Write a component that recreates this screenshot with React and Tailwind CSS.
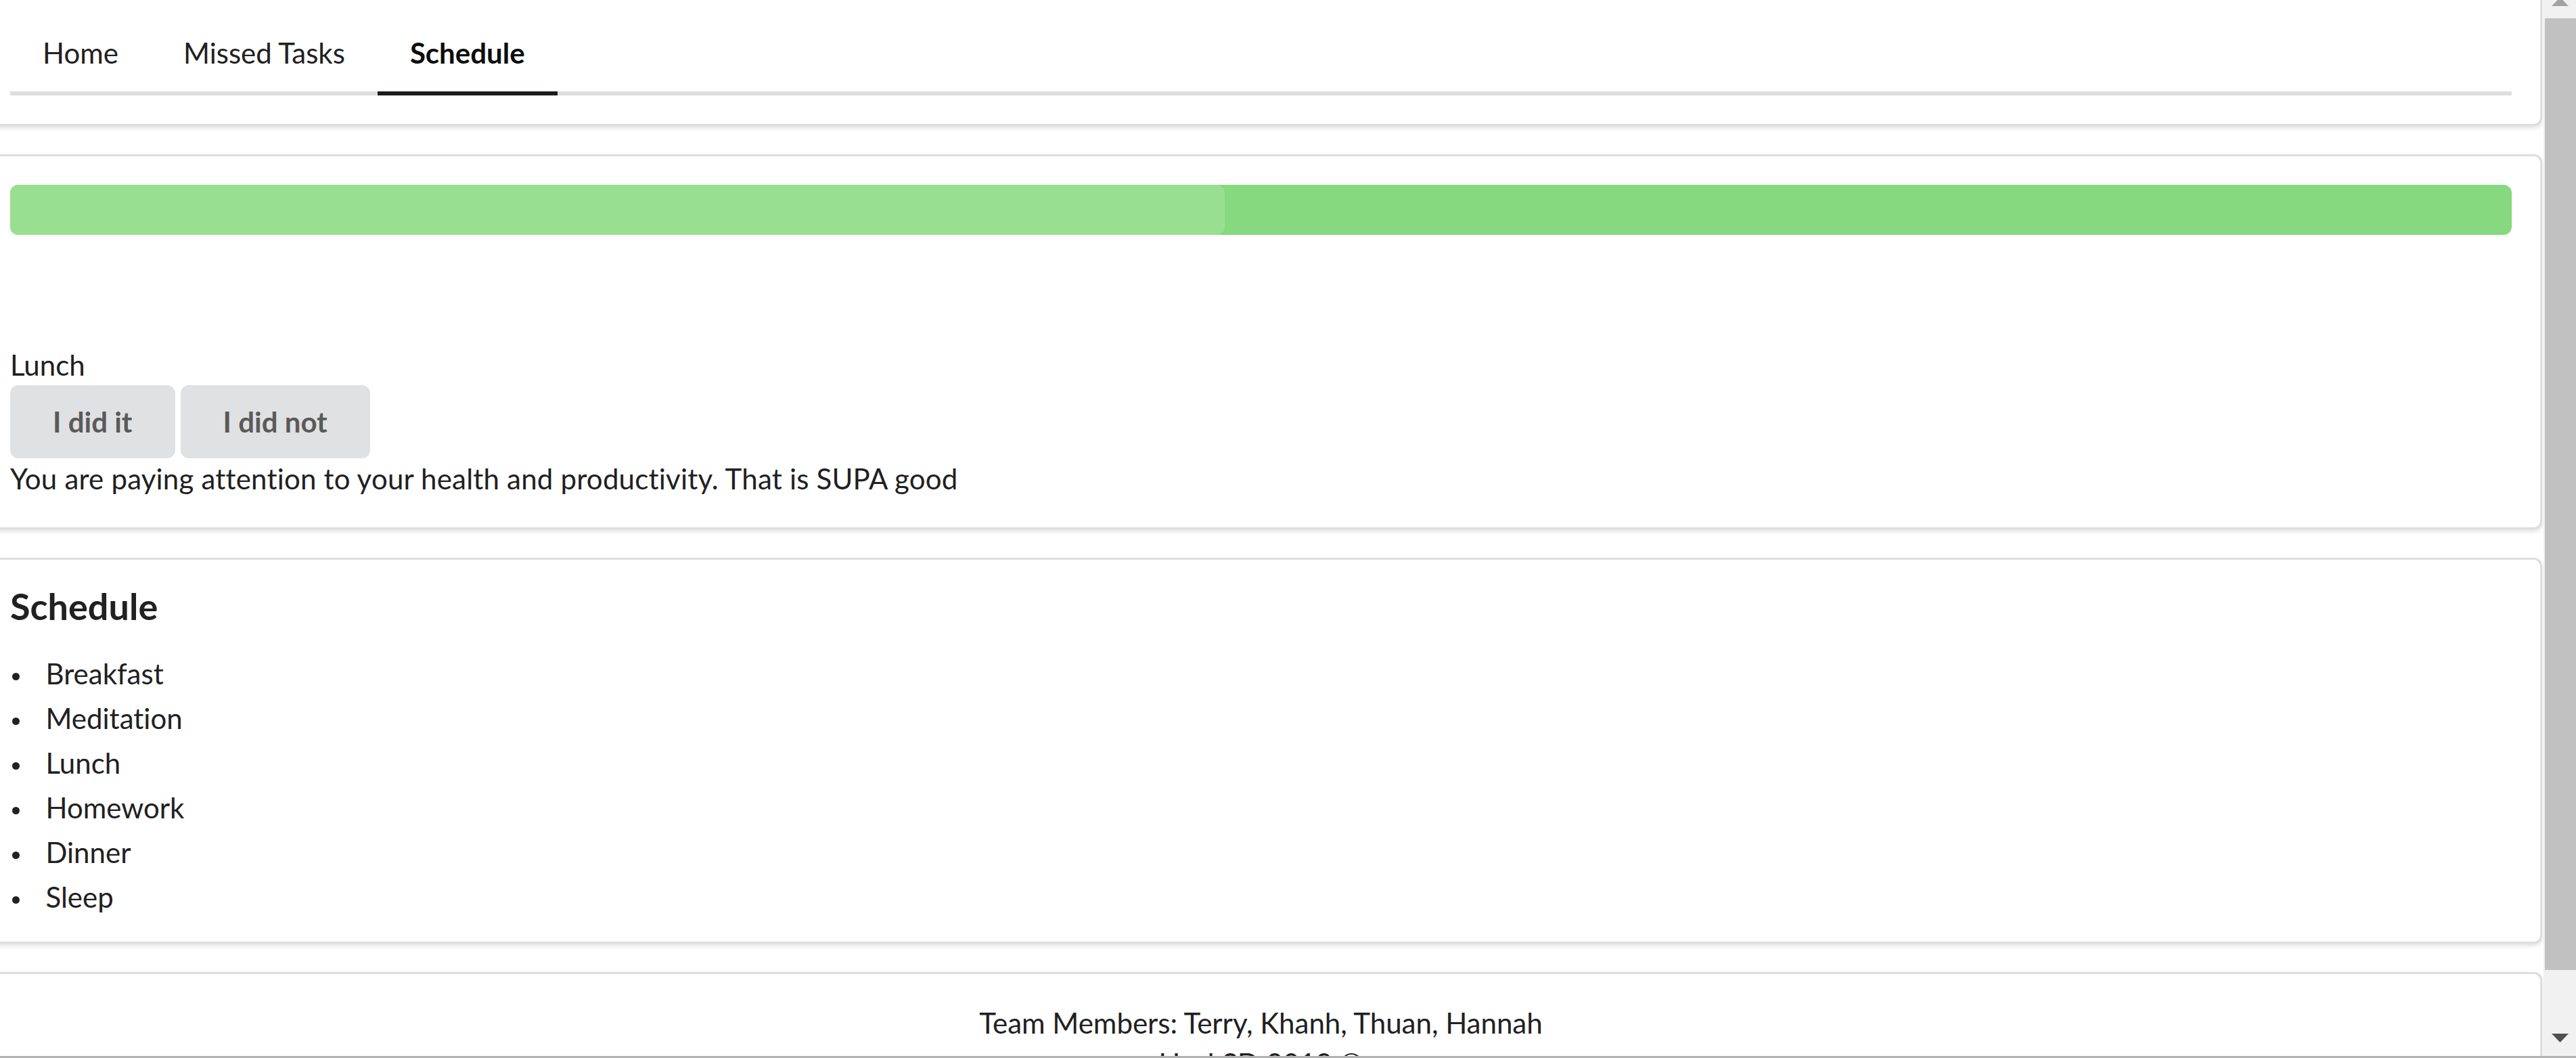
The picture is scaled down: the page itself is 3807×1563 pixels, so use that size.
import React from 'react';

const tabs = ['Home', 'Missed Tasks', 'Schedule'];
const schedule = ['Breakfast', 'Meditation', 'Lunch', 'Homework', 'Dinner', 'Sleep'];

function Card({ className = '', children }) {
  return (
    <div
      className={`border-[3px] border-[#dedede] rounded-[12px] bg-white shadow-[0_3px_6px_0_rgba(34,36,38,0.15)] p-[42px] ${className}`}
    >
      {children}
    </div>
  );
}

function Scrollbar() {
  return (
    <div className="w-[48px] shrink-0 flex flex-col bg-[#f1f1f1]">
      {/* up arrow (cut off at top) */}
      <div className="h-[27px] flex justify-center items-start">
        <svg width="25" height="13" viewBox="0 0 25 13" className="-mt-[4px]">
          <polygon points="12.5,0 25,13 0,13" fill="#a3a3a3" />
        </svg>
      </div>
      <div className="h-[1406px] ml-[2px] bg-[#c1c1c1]" />
      <div className="flex-1 flex flex-col justify-end items-center pb-[20px]">
        <svg width="25" height="13" viewBox="0 0 25 13">
          <polygon points="0,0 25,0 12.5,13" fill="#505050" />
        </svg>
      </div>
    </div>
  );
}

export default function App() {
  const active = 'Schedule';
  const progress = 48.55;

  return (
    <div className="h-[1563px] w-full overflow-hidden bg-white flex flex-col font-['Lato',sans-serif] text-[#212121] [font-variant-ligatures:none]">
      <div className="flex flex-1 min-h-0">
        <main className="flex-1 min-w-0 overflow-hidden">
          <div className="-mt-[24px] -ml-[30px] mr-[2px]">
            {/* ================= TABS ================= */}
            <Card>
              <nav className="flex border-b-[6px] border-[#dedede]">
                {tabs.map((t) => (
                  <button
                    key={t}
                    className={`px-[48px] py-[36px] -mb-[6px] border-b-[6px] text-[42px] leading-[42px] ${
                      t === active
                        ? 'border-[#1b1c1d] font-bold text-[#0d0d0d]'
                        : 'border-transparent text-[#212121]'
                    }`}
                  >
                    {t}
                  </button>
                ))}
              </nav>
            </Card>

            {/* ================= CURRENT TASK ================= */}
            <Card className="mt-[42px]">
              <div className="h-[74px] w-full rounded-[12px] bg-[#86d97e] overflow-hidden">
                <div
                  className="h-full rounded-[12px] bg-[#98e08f]"
                  style={{ width: `${progress}%` }}
                />
              </div>
              <div className="mt-[162px] text-[42px] leading-[60px]">Lunch</div>
              <div className="flex gap-[8px]">
                <button className="h-[108px] px-[63px] rounded-[12px] bg-[#e0e1e2] text-[#5a5a5a] font-bold text-[42px] leading-[42px]">
                  I did it
                </button>
                <button className="h-[108px] px-[63px] rounded-[12px] bg-[#e0e1e2] text-[#5a5a5a] font-bold text-[42px] leading-[42px]">
                  I did not
                </button>
              </div>
              <p className="text-[42px] leading-[60px] tracking-[0.2px]">
                You are paying attention to your health and productivity. That is SUPA good
              </p>
            </Card>

            {/* ================= SCHEDULE ================= */}
            <Card className="mt-[42px]">
              <h3 className="text-[54px] leading-[54px] font-bold mb-[48px]">Schedule</h3>
              <ul className="flex flex-col gap-[18px]">
                {schedule.map((s) => (
                  <li key={s} className="flex items-start text-[42px] leading-[48px]">
                    <span className="w-[52.5px] shrink-0">
                      <span className="block mt-[23px] ml-[3px] w-[11px] h-[11px] rounded-full bg-[#212121]" />
                    </span>
                    <span>{s}</span>
                  </li>
                ))}
              </ul>
            </Card>

            {/* ================= FOOTER ================= */}
            <Card className="mt-[42px] text-center text-[42px] leading-[60px]">
              <div>Team Members: Terry, Khanh, Thuan, Hannah</div>
              <div>HackSD 2019 ©</div>
            </Card>
          </div>
        </main>
        <Scrollbar />
      </div>
      <div className="h-[3px] bg-[#b3b3b3]" />
    </div>
  );
}
